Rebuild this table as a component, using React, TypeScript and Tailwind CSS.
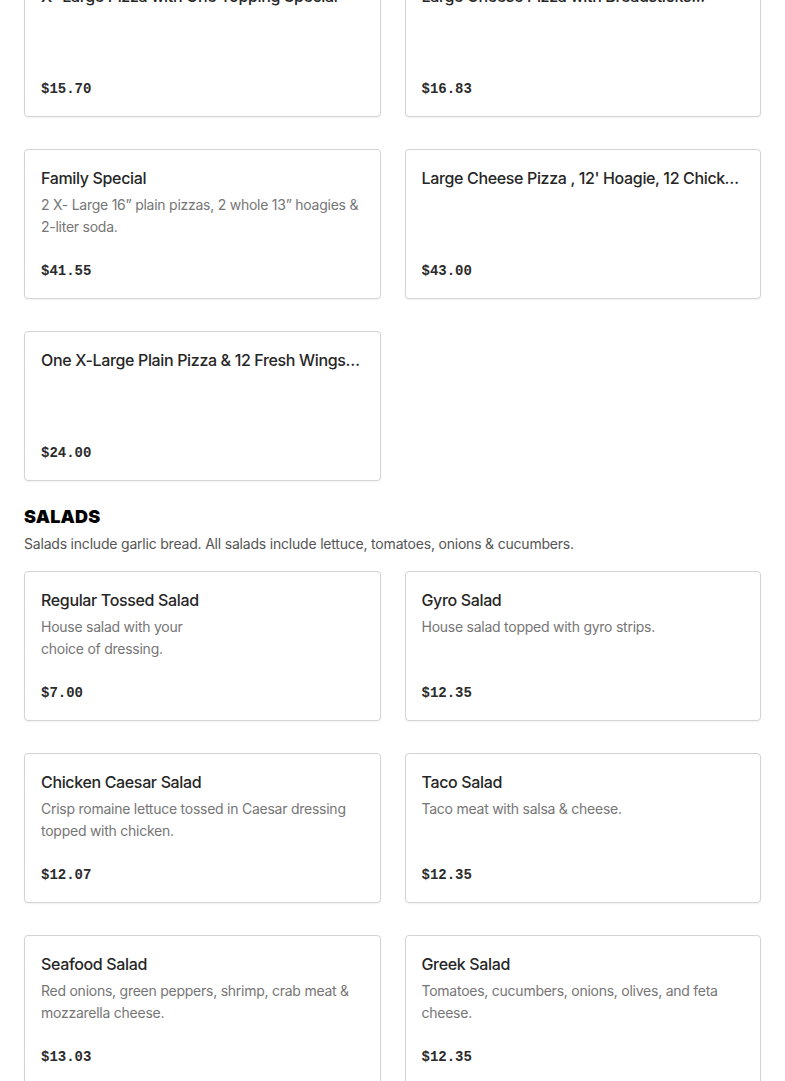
import React from "react"

type Item = {
  name: string
  desc?: React.ReactNode
  price: string
}

const specials: Item[] = [
  { name: "X- Large Pizza with One Topping Special", price: "$15.70" },
  { name: "Large Cheese Pizza with Breadsticks...", price: "$16.83" },
  {
    name: "Family Special",
    desc: "2 X- Large 16” plain pizzas, 2 whole 13” hoagies & 2-liter soda.",
    price: "$41.55",
  },
  { name: "Large Cheese Pizza , 12' Hoagie, 12 Chicken Wings & 2-liter soda", price: "$43.00" },
  { name: "One X-Large Plain Pizza & 12 Fresh Wings Special", price: "$24.00" },
]

const salads: Item[] = [
  {
    name: "Regular Tossed Salad",
    desc: (
      <>
        House salad with your
        <br />
        choice of dressing.
      </>
    ),
    price: "$7.00",
  },
  { name: "Gyro Salad", desc: "House salad topped with gyro strips.", price: "$12.35" },
  {
    name: "Chicken Caesar Salad",
    desc: "Crisp romaine lettuce tossed in Caesar dressing topped with chicken.",
    price: "$12.07",
  },
  { name: "Taco Salad", desc: "Taco meat with salsa & cheese.", price: "$12.35" },
  {
    name: "Seafood Salad",
    desc: "Red onions, green peppers, shrimp, crab meat & mozzarella cheese.",
    price: "$13.03",
  },
  { name: "Greek Salad", desc: "Tomatoes, cucumbers, onions, olives, and feta cheese.", price: "$12.35" },
]

function MenuCard({ item }: { item: Item }) {
  return (
    <div className="flex h-[150px] min-w-0 flex-col justify-between rounded border border-[#d4d4d4] bg-white px-4 pt-4 pb-[17px] shadow-[0_1px_2px_rgba(0,0,0,0.06)]">
      <div className="min-w-0">
        <h3 className="truncate text-[16px] leading-6 font-medium tracking-[-0.35px] text-[#262626]">
          {item.name}
        </h3>
        {item.desc && (
          <p className="mt-1 text-[14px] leading-[22px] tracking-[-0.25px] text-[#767676]">{item.desc}</p>
        )}
      </div>
      <div className="font-['Liberation_Mono',monospace] text-[14px] leading-5 font-bold text-[#2b2b2b]">
        {item.price}
      </div>
    </div>
  )
}

export default function App() {
  return (
    <div className="min-h-screen bg-white font-['Inter',sans-serif] antialiased">
      <div className="-mt-[33px] px-6">
        <div className="grid grid-cols-2 gap-x-6 gap-y-8">
          {specials.map((item) => (
            <MenuCard key={item.name} item={item} />
          ))}
        </div>

        <div className="mt-6">
          <h2 className="text-[18px] leading-6 font-black tracking-[0.2px] text-black uppercase">Salads</h2>
          <p className="mt-[5px] text-[14px] leading-5 tracking-[-0.2px] text-[#555555]">
            Salads include garlic bread. All salads include lettuce, tomatoes, onions & cucumbers.
          </p>
        </div>

        <div className="mt-[17px] grid grid-cols-2 gap-x-6 gap-y-8 pb-8">
          {salads.map((item) => (
            <MenuCard key={item.name} item={item} />
          ))}
        </div>
      </div>
    </div>
  )
}
